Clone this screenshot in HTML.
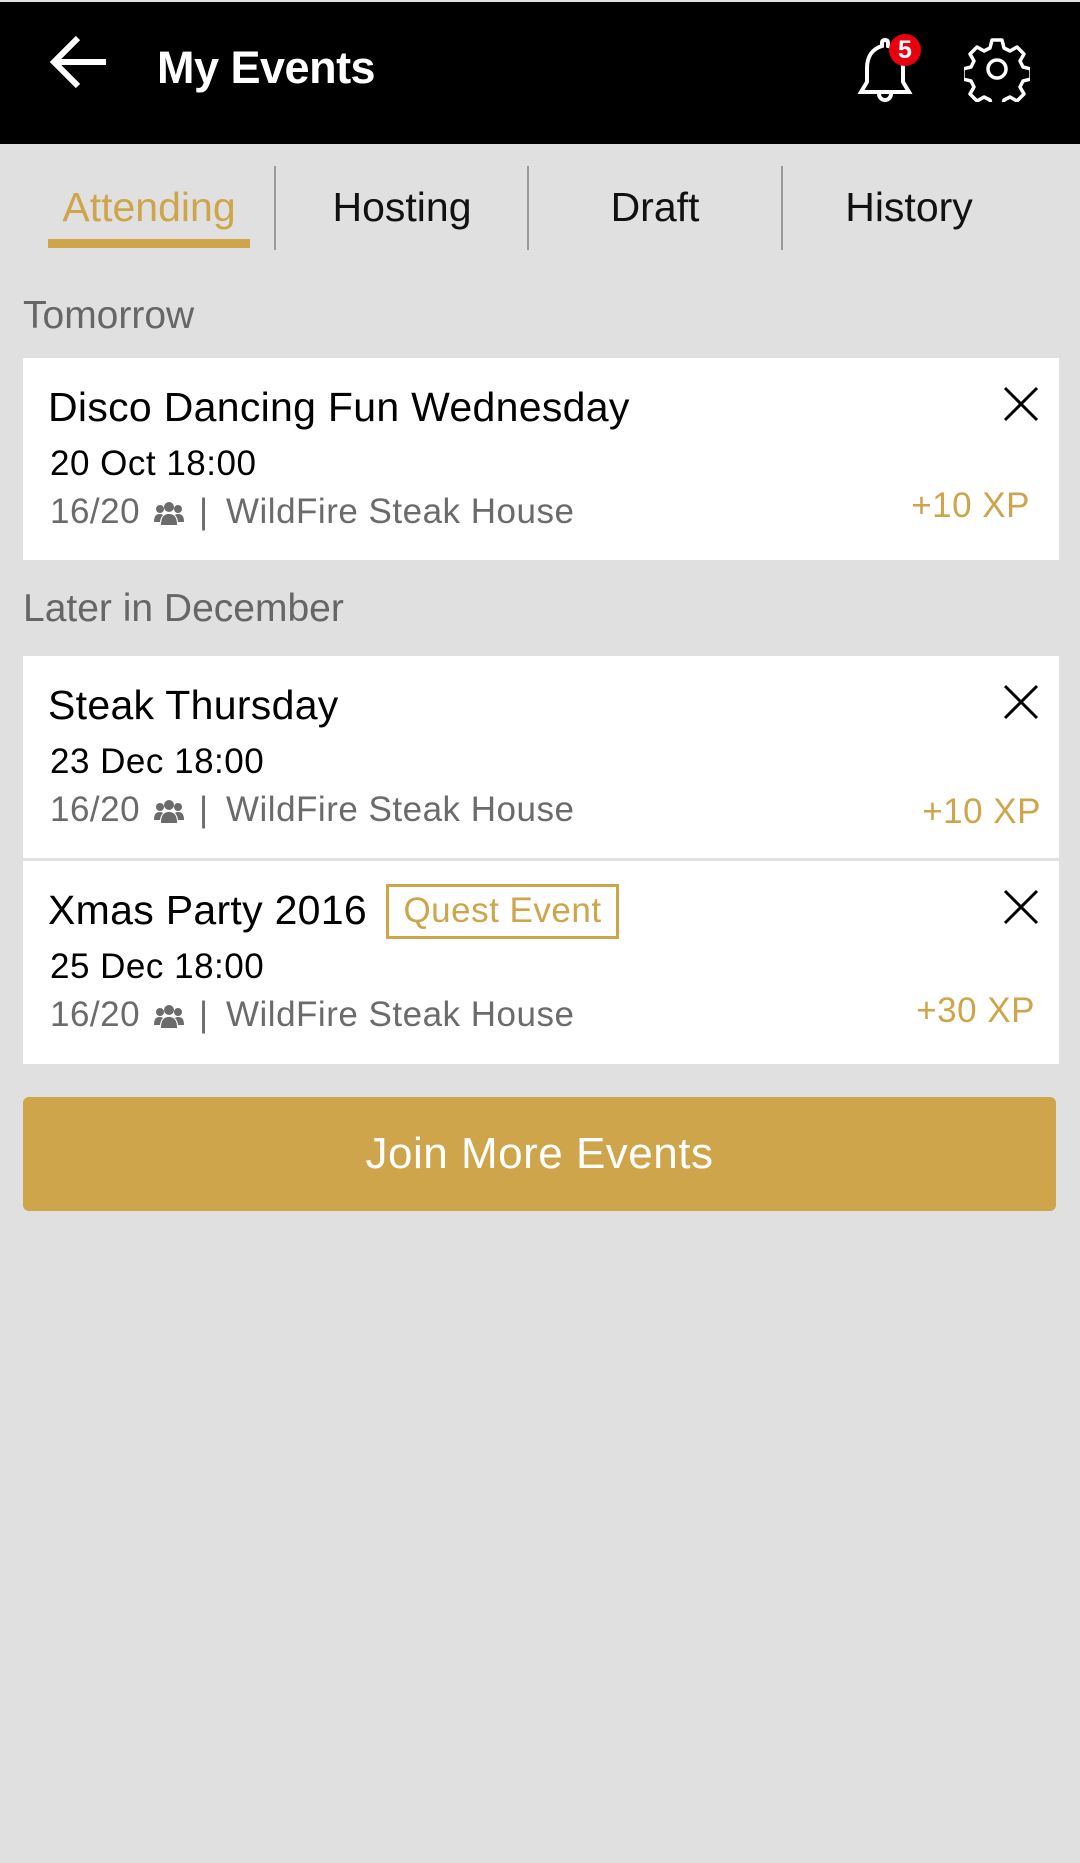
<!DOCTYPE html>
<html><head><meta charset="utf-8"><style>
*{margin:0;padding:0;box-sizing:border-box}
body{width:1080px;height:1863px;background:#e0e0e0;font-family:"Liberation Sans",sans-serif;position:relative;overflow:hidden}
.a{position:absolute;white-space:nowrap}
.hdr{position:absolute;left:0;top:0;width:1080px;height:144px;background:#000;border-top:2px solid #e0e0e0}
.tab{position:absolute;top:184px;font-size:41px;color:#111;transform:translateX(-50%)}
.div{position:absolute;top:166px;width:2px;height:84px;background:#9a9a9a}
.sec{font-size:39px;color:#666}
.card{position:absolute;left:23px;width:1036px;background:#fff}
.t{font-size:41px;color:#000;letter-spacing:0.3px}
.d{font-size:35px;color:#000;letter-spacing:0.5px}
.m{font-size:35px;color:#6b6b6b;letter-spacing:0.5px}
.xp{font-size:35px;color:#cfa54c;letter-spacing:0.5px}
.x{position:absolute;width:36px;height:36px}
</style></head><body>
<div class="hdr"></div>
<svg class="a" style="left:48px;top:34px" width="62" height="56" viewBox="0 0 62 56"><path d="M58 28H6M30 4L6 28l24 24" stroke="#fff" stroke-width="6" fill="none"/></svg>
<div class="a" style="left:157px;top:42px;font-size:45px;color:#fff;font-weight:bold;letter-spacing:-0.5px">My Events</div>
<svg class="a" style="left:850px;top:34px" width="70" height="72" viewBox="0 0 70 72"><path d="M35 6c-2 0-3 1-3 3v3c-10 3-15 11-15 22v14l-6 10h48l-6-10V34c0-11-5-19-15-22V9c0-2-1-3-3-3z" stroke="#fff" stroke-width="4" fill="none"/><path d="M29 60a6 6 0 0 0 12 0" stroke="#fff" stroke-width="4" fill="none"/></svg>
<div class="a" style="left:889px;top:34px;width:32px;height:32px;border-radius:50%;background:#e8000e;color:#fff;font-size:25px;font-weight:bold;text-align:center;line-height:32px">5</div>
<svg class="a" style="left:964px;top:36px" width="66" height="66" viewBox="0 0 66 66"><g transform="translate(33 33)"><path d="M-5-29h10l2 8 6 3 7-4 7 7-4 7 3 6 8 2v10l-8 2-3 6 4 7-7 7-7-4-6 3-2 8h-10l-2-8-6-3-7 4-7-7 4-7-3-6-8-2v-10l8-2 3-6-4-7 7-7 7 4 6-3z" stroke="#fff" stroke-width="3.5" fill="none" stroke-linejoin="round"/><circle r="9" stroke="#fff" stroke-width="3.5" fill="none"/></g></svg>

<div class="tab" style="left:149px;color:#cfa54c">Attending</div>
<div class="a" style="left:48px;top:239px;width:202px;height:9px;background:#cfa54c"></div>
<div class="div" style="left:274px"></div>
<div class="tab" style="left:402px">Hosting</div>
<div class="div" style="left:527px"></div>
<div class="tab" style="left:655px">Draft</div>
<div class="div" style="left:781px"></div>
<div class="tab" style="left:909px">History</div>

<div class="a sec" style="left:23px;top:294px">Tomorrow</div>
<div class="card" style="top:358px;height:202px">
 <div class="a t" style="left:25px;top:26px">Disco Dancing Fun Wednesday</div>
 <svg class="x" style="left:980px;top:28px" viewBox="0 0 36 36"><path d="M2 2L34 34M34 2L2 34" stroke="#000" stroke-width="3"/></svg>
 <div class="a d" style="left:27px;top:86px">20 Oct 18:00</div>
 <div class="a m" style="left:27px;top:134px">16/20</div><div class="a m" style="left:176px;top:134px">|</div><div class="a m" style="left:203px;top:134px">WildFire Steak House</div>
 <svg class="a" style="left:131px;top:142px" width="30" height="26" viewBox="0 0 30 26"><g fill="#6b6b6b"><circle cx="15" cy="7" r="5"/><circle cx="6" cy="9" r="4"/><circle cx="24" cy="9" r="4"/><path d="M7 25c0-8 3-11 8-11s8 3 8 11z"/><path d="M0 22c0-6 2-8 6-8 2 0 3 1 3 1-2 2-3 5-3 7z"/><path d="M30 22c0-6-2-8-6-8-2 0-3 1-3 1 2 2 3 5 3 7z"/></g></svg>
 <div class="a xp" style="right:29px;top:128px">+10 XP</div>
</div>

<div class="a sec" style="left:23px;top:587px">Later in December</div>
<div class="card" style="top:656px;height:202px">
 <div class="a t" style="left:25px;top:26px">Steak Thursday</div>
 <svg class="x" style="left:980px;top:28px" viewBox="0 0 36 36"><path d="M2 2L34 34M34 2L2 34" stroke="#000" stroke-width="3"/></svg>
 <div class="a d" style="left:27px;top:86px">23 Dec 18:00</div>
 <div class="a m" style="left:27px;top:134px">16/20</div><div class="a m" style="left:176px;top:134px">|</div><div class="a m" style="left:203px;top:134px">WildFire Steak House</div>
 <svg class="a" style="left:131px;top:142px" width="30" height="26" viewBox="0 0 30 26"><g fill="#6b6b6b"><circle cx="15" cy="7" r="5"/><circle cx="6" cy="9" r="4"/><circle cx="24" cy="9" r="4"/><path d="M7 25c0-8 3-11 8-11s8 3 8 11z"/><path d="M0 22c0-6 2-8 6-8 2 0 3 1 3 1-2 2-3 5-3 7z"/><path d="M30 22c0-6-2-8-6-8-2 0-3 1-3 1 2 2 3 5 3 7z"/></g></svg>
 <div class="a xp" style="right:18px;top:136px">+10 XP</div>
</div>
<div class="card" style="top:861px;height:203px">
 <div class="a t" style="left:25px;top:26px">Xmas Party 2016</div>
 <div class="a" style="left:363px;top:23px;width:233px;height:55px;border:3px solid #cfa54c;color:#cfa54c;font-size:35px;text-align:center;line-height:48px;letter-spacing:0.5px">Quest Event</div>
 <svg class="x" style="left:980px;top:28px" viewBox="0 0 36 36"><path d="M2 2L34 34M34 2L2 34" stroke="#000" stroke-width="3"/></svg>
 <div class="a d" style="left:27px;top:86px">25 Dec 18:00</div>
 <div class="a m" style="left:27px;top:134px">16/20</div><div class="a m" style="left:176px;top:134px">|</div><div class="a m" style="left:203px;top:134px">WildFire Steak House</div>
 <svg class="a" style="left:131px;top:142px" width="30" height="26" viewBox="0 0 30 26"><g fill="#6b6b6b"><circle cx="15" cy="7" r="5"/><circle cx="6" cy="9" r="4"/><circle cx="24" cy="9" r="4"/><path d="M7 25c0-8 3-11 8-11s8 3 8 11z"/><path d="M0 22c0-6 2-8 6-8 2 0 3 1 3 1-2 2-3 5-3 7z"/><path d="M30 22c0-6-2-8-6-8-2 0-3 1-3 1 2 2 3 5 3 7z"/></g></svg>
 <div class="a xp" style="right:24px;top:130px">+30 XP</div>
</div>

<div class="a" style="left:23px;top:1097px;width:1033px;height:114px;background:#cfa54c;border-radius:6px;color:#fff;font-size:44px;text-align:center;line-height:114px;letter-spacing:0.5px">Join More Events</div>
</body></html>
